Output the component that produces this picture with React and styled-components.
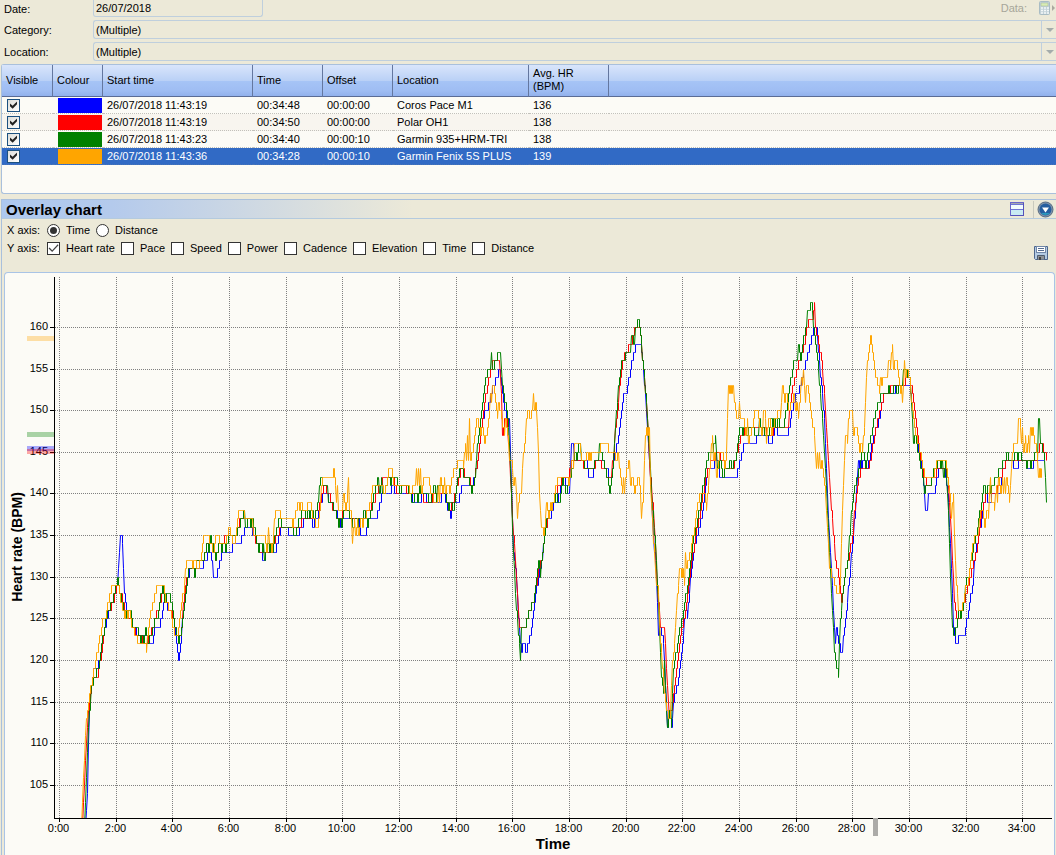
import { useState } from 'react';
import styled, { createGlobalStyle } from 'styled-components';

const GlobalStyle = createGlobalStyle`
    * {
        box-sizing: border-box;
    }

    body {
        margin: 0;
        background-color: #ece9d8;
        color: #000;
        font-family: "Liberation Sans", Arial, sans-serif;
        font-size: 11px;
        line-height: 13px;
        overflow-x: hidden;
    }

    input, select, button {
        font: inherit;
        color: inherit;
        margin: 0;
    }
`;

const Details = styled.form`
    display: flex;
    flex-direction: column;
    gap: 3px;
    margin-bottom: 3px;
`;

const DetailRow = styled.div`
    display: flex;
    align-items: center;
    height: ${({ $first }) => ($first ? '17px' : '19px')};
`;

const DetailLabel = styled.label`
    flex: none;
    width: 93px;
    padding: 1px 0 0 4px;
`;

const DateInput = styled.input`
    width: 170px;
    height: 100%;
    padding: 0 2px;
    background: transparent;
    border: 1px solid #bfcfdd;
    border-top: none;
    border-radius: 0 0 3px 3px;
    outline: none;
`;

const DataTools = styled.div`
    display: flex;
    align-items: center;
    gap: 12px;
    margin-left: auto;
    color: #a7a69a;
`;

const IconButton = styled.button`
    display: flex;
    padding: 0;
    border: none;
    background: none;
    cursor: pointer;
`;

const SelectBox = styled.div`
    display: flex;
    flex: 1;
    height: 100%;
    border: 1px solid #bfcfdd;
    border-right: none;
    border-radius: 3px 0 0 3px;
`;

const Select = styled.select`
    flex: 1;
    padding: 2px 2px 0;
    appearance: none;
    background: transparent;
    border: none;
    outline: none;
`;

const SelectArrow = styled.span`
    display: flex;
    align-items: center;
    width: 15px;
    padding-left: 4px;
    border-left: 1px solid #bfcfdd;

    &::before {
        content: "";
        border: 4px solid transparent;
        border-top-color: #a4acab;
        border-bottom: none;
    }
`;

const TablePanel = styled.div`
    margin-left: 1px;
    padding-bottom: 28px;
    background-color: #fcfbf6;
    border: 1px solid #a9c0dc;
    border-right: none;
    border-radius: 3px 0 0 3px;
`;

const Table = styled.table`
    width: 100%;
    table-layout: fixed;
    border-collapse: separate;
    border-spacing: 0;
`;

const HeadRow = styled.tr`
    height: 32px;
    background: linear-gradient(#d9e5fb, #b9d0f6 50%, #a6c4f6 51%, #9fbdf3 80%, #8fafeb);
`;

const Th = styled.th`
    width: ${({ $width }) => ($width ? `${$width}px` : 'auto')};
    padding: 0 4px 1px;
    font-weight: normal;
    text-align: left;
    border-bottom: 1px solid #5b6c95;
    border-right: ${({ $width }) => ($width ? '1px solid #64779f' : 'none')};
`;

const Td = styled.td`
    height: 17px;
    padding: 0 5px 0 4px;
    line-height: 16px;
    white-space: nowrap;
    border-bottom: 1px dotted #c2c1bb;
`;

const Row = styled.tr`
    height: 17px;
    color: ${({ $selected }) => ($selected ? '#fff' : '#000')};
    background-color: ${({ $selected }) => ($selected ? '#316ac5' : '#fcfbf6')};

    &:nth-child(2) {
        background-color: #f8f5ef;
    }

    ${Td} {
        border-bottom-color: ${({ $selected }) => ($selected ? '#4a74b5' : '#c2c1bb')};
    }
`;

const SwatchTd = styled(Td)`
    padding: 0 1px 0 5px;
`;

const Swatch = styled.div`
    height: 15px;
    background-color: ${({ $color }) => $color};
`;

const Tick = styled.input`
    display: grid;
    place-content: center;
    flex: none;
    width: 13px;
    height: 13px;
    appearance: none;
    background: #fff;
    border: 1px solid #333;

    &:checked::after {
        content: "";
        width: 11px;
        height: 11px;
        background-color: #444;
        clip-path: polygon(5% 50%, 14% 42%, 38% 66%, 88% 12%, 96% 20%, 38% 82%);
    }
`;

const RowTick = styled(Tick)`
    margin-left: 1px;
    background: linear-gradient(135deg, #dcdcd7, #fff);
    border-color: #1c5180;

    &:checked::after {
        background-color: #222;
        clip-path: polygon(18% 36%, 42% 56%, 82% 18%, 82% 44%, 42% 84%, 18% 62%);
    }
`;

const Radio = styled(Tick)`
    border-radius: 50%;

    &:checked::after {
        width: 7px;
        height: 7px;
        border-radius: 50%;
        background-color: #333;
        clip-path: none;
    }
`;

const Section = styled.section`
    margin: 5px 0 0 1px;
    border-left: 1px solid #a9c0dc;
`;

const SectionHeader = styled.header`
    display: flex;
    align-items: center;
    height: 20px;
    padding-left: 4px;
    border-top: 1px solid #a9c0dc;
    border-bottom: 1px solid #b4cade;
    background: linear-gradient(to right, #adc8ef, #b4caec 110px, #ece9d8 410px);

    h2 {
        flex: 1;
        margin: 0;
        padding-top: 2px;
        font-size: 15px;
        line-height: 18px;
    }
`;

const MenuButton = styled(IconButton)`
    justify-content: center;
    width: 23px;
    margin-left: 8px;
    border-left: 1px solid #c9c9bd;
`;

const Options = styled.div`
    display: flex;
    align-items: flex-end;
    justify-content: space-between;
`;

const Axes = styled.div`
    display: flex;
    flex-direction: column;
    gap: 5px;
    padding: 5px 0 17px 5px;
`;

const AxisRow = styled.div`
    display: flex;
    align-items: center;
    gap: 6px;
    height: 13px;
`;

const AxisName = styled.span`
    width: 34px;
    white-space: nowrap;
`;

const Option = styled.label`
    display: flex;
    align-items: center;
    gap: 6px;
    white-space: nowrap;
`;

const SaveButton = styled(IconButton)`
    margin: 0 7px 11px 0;
`;

const ChartPanel = styled.div`
    margin: 0 1px 0 2px;
    background-color: #fcfbf6;
    border: 1px solid #a9c4e6;
    border-bottom: none;
    border-radius: 4px 4px 0 0;
`;

const ChartSvg = styled.svg`
    display: block;
    width: 100%;
    height: auto;

    text {
        font-family: "Liberation Sans", Arial, sans-serif;
        font-size: 11px;
    }

    .title {
        font-size: 14px;
        font-weight: bold;
    }

    .time-title {
        font-size: 15px;
    }

    .grid {
        stroke: #808080;
        stroke-dasharray: 1 1;
        shape-rendering: crispEdges;
    }

    .axis {
        stroke: #000;
        shape-rendering: crispEdges;
    }
`;

const columns = [
    { name: 'Visible', width: 51 },
    { name: 'Colour', width: 50 },
    { name: 'Start time', width: 150 },
    { name: 'Time', width: 70 },
    { name: 'Offset', width: 70 },
    { name: 'Location', width: 136 },
    { name: 'Avg. HR (BPM)', width: 80 },
];

const activities = [
    { color: '#0000ff', start: '26/07/2018 11:43:19', time: '00:34:48', offset: '00:00:00', location: 'Coros Pace M1', hr: 136 },
    { color: '#ff0000', start: '26/07/2018 11:43:19', time: '00:34:50', offset: '00:00:00', location: 'Polar OH1', hr: 138 },
    { color: '#008000', start: '26/07/2018 11:43:23', time: '00:34:40', offset: '00:00:10', location: 'Garmin 935+HRM-TRI', hr: 138 },
    { color: '#ffa500', start: '26/07/2018 11:43:36', time: '00:34:28', offset: '00:00:10', location: 'Garmin Fenix 5S PLUS', hr: 139 },
];

const metrics = ['Heart rate', 'Pace', 'Speed', 'Power', 'Cadence', 'Elevation', 'Time', 'Distance'];

// each entry is "position,bpm"; the trace steps one beat at a time between entries
const traces = [
    {
        color: '#0000ff',
        data: `85,100 87,104 88,110 89,114 91,117 93,119 97,119 101,121 103,123 106,125 109,126 112,127 115,128 117,129
        119,133 120,135 121,135 122,134 124,128 126,126 129,125 133,124 138,123 145,123 148,122 152,122 154,124 158,124 161,125
        163,127 165,128 167,126 171,126 174,124 177,121 178,120 180,122 183,126 186,129 189,131 194,131 200,131 205,132
        209,133 212,132 213,130 216,130 219,132 222,133 231,133 232,134 240,134 242,135 245,136 250,136 253,135 257,134
        260,133 263,132 264,132 266,133 274,133 277,134 281,136 286,136 288,135 297,135 301,136 305,137 310,137 312,136
        316,137 319,138 323,140 326,140 329,139 335,138 337,137 341,136 343,137 358,137 360,135 365,135 368,137 376,137
        382,140 390,140 392,141 395,140 410,140 412,139 420,139 421,140 425,140 426,139 438,139 443,140 448,138 450,137
        452,139 458,139 461,141 472,141 476,143 479,146 482,149 486,150 489,151 493,153 496,154 499,155 501,153 503,151
        506,149 509,149 511,141 513,133 516,130 518,125 520,122 521,121 523,122 525,121 526,121 530,123 534,127 538,130
        542,132 544,135 547,137 550,137 553,139 557,139 562,142 564,142 567,140 569,140 571,146 573,146 574,144 586,144
        588,142 592,142 594,144 602,144 604,143 611,142 613,144 617,146 620,149 623,152 626,152 630,155 632,156 635,158
        640,158 642,156 645,152 648,146 650,142 653,135 656,130 658,123 660,124 663,122 665,117 667,112 669,114 671,112
        674,116 677,117 680,120 683,123 685,126 687,125 690,130 694,134 699,136 702,138 706,142 708,143 713,143 715,145
        719,142 736,142 739,144 744,146 755,146 757,147 767,147 768,146 771,146 774,148 779,147 787,147 790,149 793,151
        797,152 800,153 804,155 808,157 811,159 814,160 816,160 818,157 821,153 824,149 826,143 828,137 831,131 834,124
        835,122 836,124 838,122 840,121 842,121 844,124 847,127 849,130 852,134 855,138 857,142 858,144 859,143 860,144
        861,143 862,144 867,143 870,145 873,147 877,148 880,150 884,152 892,152 897,153 909,153 911,151 914,148 917,146
        921,143 924,140 925,138 927,138 928,140 934,140 938,143 944,143 948,139 951,131 953,124 955,122 957,122 958,123
        964,123 968,126 972,129 975,133 978,135 981,137 985,140 987,139 990,139 992,140 999,140 1001,142 1003,143
        1006,144 1012,144 1013,143 1017,143 1019,144 1032,143 1034,144 1044,144`,
    },
    {
        color: '#ff0000',
        data: `82,100 86,110 88,114 92,118 97,118 101,121 104,124 108,126 113,127 117,129 120,128 124,126 130,125 136,123
        146,122 152,124 157,126 162,128 165,127 170,126 174,124 178,122 181,124 185,129 189,131 203,132 207,134 211,134
        215,132 219,134 229,135 235,135 240,137 249,137 252,136 255,134 262,133 270,133 276,135 282,136 298,136 303,137
        312,137 318,138 323,141 328,140 333,138 338,137 345,138 352,137 362,137 369,138 376,140 383,142 392,142 396,140
        402,141 409,140 415,140 430,139 434,140 444,140 449,138 455,140 460,143 466,142 473,141 478,145 484,151 490,155
        494,156 499,156 501,152 502,147 504,149 506,149 509,145 512,137 516,130 519,124 525,124 528,126 533,127 537,130
        541,132 545,136 550,138 555,140 562,142 568,142 572,144 579,144 586,143 592,143 598,144 603,143 608,142 611,142
        613,145 617,150 621,155 625,157 630,158 635,160 639,160 643,155 647,149 650,142 654,136 657,129 660,124 664,124
        667,117 669,113 671,114 675,118 680,123 685,126 690,131 695,135 700,138 705,142 711,144 718,145 721,144 725,143
        733,143 737,145 740,147 748,148 760,148 771,147 775,148 788,148 790,151 794,154 799,156 804,158 808,161 812,161
        814,163 815,160 818,158 822,155 825,150 828,144 831,138 835,132 839,129 841,127 844,130 848,132 852,135 856,140
        860,143 868,143 874,147 879,150 884,152 896,153 903,153 906,154 909,154 913,151 918,146 923,142 928,141 934,142
        938,143 944,143 948,141 951,135 954,127 956,125 960,125 966,128 971,131 976,133 980,137 985,140 995,140 1000,142
        1006,144 1035,144 1040,146 1044,145 1046,144`,
    },
    {
        color: '#008000',
        data: `84,100 86,106 88,112 91,117 94,118 98,119 101,122 104,124 108,126 112,127 117,130 119,128 124,126 126,125
        128,126 130,126 132,124 136,124 138,123 140,122 142,123 143,122 145,124 147,122 151,123 155,125 157,125 159,127
        162,129 164,127 167,128 171,127 174,124 178,122 180,123 185,128 188,131 193,131 194,130 196,132 203,132 206,134
        208,133 210,135 213,133 215,132 219,134 221,133 223,134 225,133 229,135 236,135 238,136 241,137 244,138 245,136
        248,137 250,136 252,137 255,135 258,133 260,134 262,133 263,134 264,132 267,134 269,133 271,134 272,133 274,135
        279,137 281,136 290,136 294,135 299,137 303,138 306,137 308,138 309,137 311,138 314,137 318,139 320,142 322,141
        327,141 328,139 331,139 334,138 336,137 338,136 340,137 341,136 343,138 347,138 353,136 355,137 357,136 358,137
        362,137 364,138 367,136 369,137 372,139 376,141 378,142 379,140 381,142 382,140 384,140 388,142 390,141 392,142
        395,142 397,141 400,140 401,141 406,141 408,140 412,139 415,140 417,139 419,141 420,140 424,140 430,139 434,141
        436,139 437,141 440,141 445,140 448,138 450,139 453,138 456,141 460,143 464,142 468,142 469,141 471,140 475,142
        477,146 480,149 484,153 488,155 490,155 491,157 492,155 495,156 498,157 500,157 502,153 504,151 506,150 508,148
        510,143 513,133 516,126 518,123 520,120 521,124 525,124 528,126 533,127 536,130 538,132 540,130 541,132 545,136
        549,138 554,139 556,140 557,139 559,139 562,142 565,140 568,141 572,143 574,145 576,144 578,146 580,146 581,144
        585,143 593,143 595,144 598,144 599,146 602,144 607,142 609,140 613,144 616,150 619,154 621,156 624,156 625,157
        630,157 631,159 634,158 635,160 638,161 640,159 643,155 646,151 649,145 652,138 655,134 658,127 661,118 663,116
        664,120 665,117 666,114 667,112 669,114 671,112 673,119 678,123 683,126 688,130 692,134 696,136 700,139 705,143
        709,145 712,145 715,147 717,143 720,144 722,142 725,143 728,143 729,144 731,143 735,144 738,147 740,148 742,147
        744,148 747,147 749,148 758,147 759,149 761,147 763,148 764,147 768,147 770,149 772,148 773,149 776,148 777,149
        779,148 783,148 788,152 793,156 797,156 798,158 800,156 803,159 806,160 807,162 809,162 811,163 813,160 816,157
        820,152 823,147 826,141 829,133 832,126 834,121 836,119 838,118 840,125 843,129 848,133 852,139 856,142 859,143
        861,145 863,145 865,143 867,145 872,148 877,151 883,152 887,152 888,153 889,152 892,152 894,153 897,152 899,153
        902,153 903,155 909,154 911,151 913,146 915,147 920,143 923,142 924,140 925,141 930,141 933,143 936,143 938,144
        940,143 942,144 943,142 945,144 948,138 950,130 952,124 953,123 956,124 958,126 960,125 964,127 966,130 968,130
        972,133 977,136 981,139 983,141 986,140 988,141 990,140 992,141 996,142 1000,143 1003,144 1005,144 1006,145
        1008,144 1012,144 1015,145 1017,144 1019,145 1022,144 1024,144 1026,143 1028,144 1030,143 1032,144 1036,145
        1037,144 1038,149 1039,149 1040,146 1044,144 1045,142 1046,139`,
    },
    {
        color: '#ffa500',
        data: `81,100 85,111 86,113 88,115 92,118 95,120 98,122 101,124 102,125 105,125 107,127 110,128 111,129 118,129
        120,127 122,126 124,125 126,126 127,125 129,126 131,124 135,123 138,122 145,122 146,121 148,124 149,125 152,127
        155,128 157,129 163,129 165,127 170,126 172,124 175,123 177,123 179,125 181,127 183,128 186,132 191,132 192,131
        194,132 197,131 200,132 202,134 204,135 207,135 213,133 215,135 217,135 220,134 224,134 227,135 228,136 230,135
        232,134 234,134 236,136 238,138 243,138 244,137 252,137 253,135 264,135 266,133 267,133 268,136 269,134 271,133
        273,135 275,138 278,138 280,137 290,137 292,136 295,138 296,138 297,139 299,138 300,139 302,138 306,138 307,139
        310,139 312,137 317,136 318,137 320,139 321,141 322,142 332,142 333,143 335,141 336,139 337,141 338,138 342,138
        343,140 345,138 347,140 348,142 349,138 351,137 352,134 354,137 355,135 357,137 358,135 360,137 362,136 364,137
        368,138 371,140 373,141 382,141 383,140 386,141 388,143 391,143 393,141 408,141 409,140 411,140 412,141 415,141
        416,143 417,141 418,143 419,141 420,143 421,140 422,141 424,142 428,142 430,140 434,139 437,139 438,141 439,139
        440,142 442,140 444,142 445,140 447,141 449,140 451,142 455,143 458,144 461,144 463,143 465,146 466,144 467,147
        468,144 469,149 470,144 472,145 474,147 476,149 478,148 480,147 482,148 484,146 486,147 488,149 489,150 490,152
        491,151 492,153 494,152 495,151 497,149 498,151 501,149 504,147 505,149 508,146 509,144 511,144 513,141 515,142
        517,137 519,140 521,140 523,145 525,147 527,150 529,149 532,150 533,152 534,150 535,151 536,150 538,145 539,140
        541,136 543,135 545,137 546,139 548,137 550,139 551,138 553,139 555,141 559,142 566,142 568,141 570,142 571,144
        573,143 574,146 579,146 581,144 585,144 586,145 588,144 589,145 590,144 592,145 599,145 600,146 606,146 608,145
        613,145 615,144 618,145 619,143 620,142 622,140 623,142 624,140 626,143 629,144 630,141 632,142 634,140 637,142
        639,141 640,140 641,137 643,140 645,147 646,148 647,147 649,148 650,141 652,137 653,134 655,131 656,129 658,128
        660,122 662,119 664,116 666,114 669,113 670,114 672,120 674,122 676,126 678,129 679,131 681,130 682,131 684,129
        685,133 686,131 688,132 691,134 694,136 696,138 700,140 704,140 706,138 708,141 710,144 712,147 713,144 715,145
        716,142 718,144 720,145 722,145 724,143 726,145 727,149 728,153 729,152 730,153 731,152 732,153 733,153 734,151
        736,149 738,149 739,151 740,149 743,149 745,147 747,149 748,146 750,147 752,148 754,150 757,150 759,148 762,147
        763,150 765,149 766,146 768,149 770,148 771,147 773,148 774,149 776,149 778,150 780,149 782,153 784,151 786,152
        788,150 792,151 794,152 795,150 796,151 797,150 798,149 800,152 801,154 802,153 803,155 805,151 806,153 808,152
        810,150 812,148 814,147 816,143 817,145 818,143 819,145 820,143 821,144 823,142 825,140 827,136 829,131 832,130
        834,129 836,128 838,128 840,130 842,138 844,144 845,147 847,146 848,149 850,150 852,150 853,147 855,148 857,147
        859,145 860,146 862,145 864,148 866,154 868,157 870,159 872,157 874,155 877,153 879,152 880,154 881,153 882,154
        887,154 888,156 890,155 892,158 893,155 895,156 897,155 899,153 900,152 901,153 902,151 903,153 904,156 905,154
        906,155 909,154 911,151 914,148 917,146 920,145 922,143 925,142 933,142 936,144 945,144 947,142 950,139 951,137
        953,140 954,135 956,129 958,126 960,126 963,127 965,129 967,129 970,132 974,135 978,135 980,138 982,138 984,136
        986,138 988,137 990,142 991,139 993,139 994,138 996,141 997,139 998,142 1000,140 1002,142 1003,140 1004,142
        1005,140 1006,142 1009,139 1010,141 1012,145 1013,146 1017,146 1018,149 1019,149 1021,146 1022,148 1023,145
        1025,147 1026,145 1028,147 1029,145 1030,148 1031,147 1032,148 1034,146 1036,145 1038,142 1039,143 1040,142
        1041,143`,
    },
];

const yOf = (bpm) => Math.round(785 - (bpm - 105) * 8.33) + 0.5;
const xOf = (minutes) => Math.round(59 + minutes * 28.33) + 0.5;

function tracePath(data) {
    const points = data.trim().split(/\s+/).map((pair) => pair.split(',').map(Number));
    const path = [`M${points[0][0] + 0.5} ${yOf(points[0][1])}`];
    let last = points[0][1];

    for (let i = 1; i < points.length; i++) {
        const [x0, v0] = points[i - 1];
        const [x1, v1] = points[i];
        for (let x = x0 + 1; x <= x1; x++) {
            const value = Math.round(v0 + ((v1 - v0) * (x - x0)) / (x1 - x0));
            // single beats rise straight up, bigger jumps are slanted
            path.push(Math.abs(value - last) > 1 ? `L${x + 0.5} ${yOf(value)}` : `H${x + 0.5}V${yOf(value)}`);
            last = value;
        }
    }
    return path.join('');
}

const bpmTicks = Array.from({ length: 12 }, (_, i) => 105 + i * 5);
const timeTicks = Array.from({ length: 18 }, (_, i) => i * 2);

function CalculatorIcon() {
    return (
        <svg width="17" height="15" viewBox="0 0 17 15">
            <rect x="0.5" y="0.5" width="10" height="13" rx="1" fill="#c3d2d8" stroke="#a9bcc4" />
            <rect x="2" y="2" width="7" height="3" fill="#d9ecb4" stroke="#a5b79a" strokeWidth="0.5" />
            <path d="M2 7h8M2 9.500h8M2 12h8" stroke="#f4f8f8" strokeWidth="1.500" strokeDasharray="2 1" />
            <path d="M13 4l3 3-3 3z" fill="#aaa99f" />
        </svg>
    );
}

function LayoutIcon() {
    return (
        <svg width="15" height="15" viewBox="0 0 15 15">
            <rect x="0.5" y="0.5" width="13" height="13" fill="#f3fbfd" stroke="#6a66cc" />
            <path d="M1 1h12v1H1z" fill="#a5a8b0" />
            <path d="M1 2.500h12M1 7.500h12" stroke="#6f75d6" />
            <path d="M1 8h12v5H1z" fill="#c9ebf3" />
            <path d="M13.500 1v13M1 13.500h13" stroke="#5552ba" />
        </svg>
    );
}

function DownIcon() {
    return (
        <svg width="17" height="17" viewBox="0 0 17 17">
            <circle cx="8.500" cy="8.500" r="7.500" fill="#8195ac" stroke="#576b82" />
            <circle cx="8.500" cy="8.500" r="6" fill="#265e9f" />
            <path d="M4 12a6 6 0 0 0 9 0z" fill="#2999bd" />
            <path d="M5 6.500h7l-3.500 5z" fill="#fff" />
        </svg>
    );
}

function SaveIcon() {
    return (
        <svg width="15" height="15" viewBox="0 0 15 15">
            <path d="M0.500 0.500h13v13h-12l-1-1z" fill="#b4cbe4" stroke="#4d668d" />
            <rect x="2.500" y="0.500" width="9" height="6" fill="#fff" stroke="#7187a7" />
            <path d="M4 2.500h6M4 4.500h6" stroke="#566e93" />
            <path d="M3.500 13.500v-4h7v4" fill="#8d9195" stroke="#4d5c70" />
            <path d="M5 11h2v3H5z" fill="#444" />
        </svg>
    );
}

function Chart() {
    return (
        <ChartSvg viewBox="5 273 1049 582" role="img" aria-label="Heart rate (BPM) over Time">
            <defs>
                <clipPath id="plot">
                    <rect x="54" y="277" width="998" height="541" />
                </clipPath>
            </defs>
            {bpmTicks.map((bpm) => (
                <g key={bpm}>
                    <line className="grid" x1="55" x2="1052" y1={yOf(bpm)} y2={yOf(bpm)} />
                    <line className="axis" x1="50" x2="54" y1={yOf(bpm)} y2={yOf(bpm)} />
                    <text x="48" y={yOf(bpm) + 2.5} textAnchor="end">{bpm}</text>
                </g>
            ))}
            {timeTicks.map((minutes) => (
                <g key={minutes}>
                    <line className="grid" x1={xOf(minutes)} x2={xOf(minutes)} y1="277" y2="818" />
                    <line className="axis" x1={xOf(minutes)} x2={xOf(minutes)} y1="818" y2="822" />
                    <text x={xOf(minutes) - 1} y="832" textAnchor="middle">{`${minutes}:00`}</text>
                </g>
            ))}
            <g clipPath="url(#plot)" fill="none">
                {traces.map((trace) => (
                    <path key={trace.color} d={tracePath(trace.data)} stroke={trace.color} />
                ))}
            </g>
            <g fillOpacity="0.33">
                <rect x="27" y="446" width="27" height="5" fill="#0000ff" />
                <rect x="27" y="449" width="27" height="5" fill="#ff0000" />
                <rect x="27" y="432" width="27" height="5" fill="#008000" />
                <rect x="27" y="336" width="27" height="5" fill="#ffa500" />
            </g>
            <path className="axis" d="M54.500 277V818.500H1052" fill="none" />
            <rect x="873" y="818" width="5" height="18" fill="#acaba8" />
            <text className="title time-title" x="553" y="849" textAnchor="middle">Time</text>
            <text className="title" transform="translate(22 547) rotate(-90)" textAnchor="middle">Heart rate (BPM)</text>
        </ChartSvg>
    );
}

export default function App() {
    const [visible, setVisible] = useState([true, true, true, true]);
    const [xAxis, setXAxis] = useState('Time');
    const [yAxis, setYAxis] = useState(['Heart rate']);

    const toggleVisible = (index) => setVisible(visible.map((v, i) => (i === index ? !v : v)));
    const toggleMetric = (name) =>
        setYAxis(yAxis.includes(name) ? yAxis.filter((m) => m !== name) : [...yAxis, name]);

    return (
        <>
            <GlobalStyle />
            <Details>
                <DetailRow $first>
                    <DetailLabel htmlFor="date">Date:</DetailLabel>
                    <DateInput id="date" defaultValue="26/07/2018" />
                    <DataTools>
                        <span>Data:</span>
                        <IconButton type="button" aria-label="Data" disabled><CalculatorIcon /></IconButton>
                    </DataTools>
                </DetailRow>
                {['Category', 'Location'].map((name) => (
                    <DetailRow key={name}>
                        <DetailLabel htmlFor={name}>{name}:</DetailLabel>
                        <SelectBox>
                            <Select id={name}>
                                <option>(Multiple)</option>
                            </Select>
                            <SelectArrow />
                        </SelectBox>
                    </DetailRow>
                ))}
            </Details>
            <TablePanel>
                <Table>
                    <thead>
                        <HeadRow>
                            {columns.map((column) => (
                                <Th key={column.name} $width={column.width}>{column.name}</Th>
                            ))}
                            <Th></Th>
                        </HeadRow>
                    </thead>
                    <tbody>
                        {activities.map((activity, index) => (
                            <Row key={activity.color} $selected={index === 3}>
                                <Td>
                                    <RowTick
                                        type="checkbox"
                                        aria-label={activity.location}
                                        checked={visible[index]}
                                        onChange={() => toggleVisible(index)}
                                    />
                                </Td>
                                <SwatchTd><Swatch $color={activity.color} /></SwatchTd>
                                <Td>{activity.start}</Td>
                                <Td>{activity.time}</Td>
                                <Td>{activity.offset}</Td>
                                <Td>{activity.location}</Td>
                                <Td>{activity.hr}</Td>
                                <Td></Td>
                            </Row>
                        ))}
                    </tbody>
                </Table>
            </TablePanel>
            <Section>
                <SectionHeader>
                    <h2>Overlay chart</h2>
                    <IconButton type="button" aria-label="Layout"><LayoutIcon /></IconButton>
                    <MenuButton type="button" aria-label="Chart menu"><DownIcon /></MenuButton>
                </SectionHeader>
                <Options>
                    <Axes>
                        <AxisRow>
                            <AxisName>X axis:</AxisName>
                            {['Time', 'Distance'].map((name) => (
                                <Option key={name}>
                                    <Radio type="radio" name="xAxis" checked={xAxis === name} onChange={() => setXAxis(name)} />
                                    {name}
                                </Option>
                            ))}
                        </AxisRow>
                        <AxisRow>
                            <AxisName>Y axis:</AxisName>
                            {metrics.map((name) => (
                                <Option key={name}>
                                    <Tick type="checkbox" checked={yAxis.includes(name)} onChange={() => toggleMetric(name)} />
                                    {name}
                                </Option>
                            ))}
                        </AxisRow>
                    </Axes>
                    <SaveButton type="button" aria-label="Save chart"><SaveIcon /></SaveButton>
                </Options>
                <ChartPanel>
                    <Chart />
                </ChartPanel>
            </Section>
        </>
    );
}
